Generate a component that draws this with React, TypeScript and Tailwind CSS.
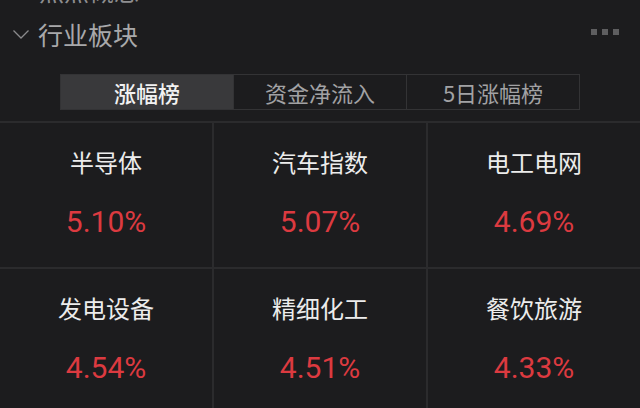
type Sector = {
  name: string
  change: string
}

const tabs = ['涨幅榜', '资金净流入', '5日涨幅榜']

const sectors: Sector[] = [
  { name: '半导体', change: '5.10%' },
  { name: '汽车指数', change: '5.07%' },
  { name: '电工电网', change: '4.69%' },
  { name: '发电设备', change: '4.54%' },
  { name: '精细化工', change: '4.51%' },
  { name: '餐饮旅游', change: '4.33%' },
]

const cjk = "font-['Noto_Sans_CJK_SC','Noto_Sans',sans-serif]"

function SectorCell({ sector }: { sector: Sector }) {
  return (
    <div className="flex h-[144px] flex-col items-center bg-[#1c1c1e] pt-[27px]">
      <div className={`${cjk} text-[24px] leading-[24px] text-[#ececec]`}>{sector.name}</div>
      <div className="mt-[33px] font-['Roboto',sans-serif] text-[30px] leading-[30px] text-[#dc3a40]">
        {sector.change}
      </div>
    </div>
  )
}

export default function App() {
  return (
    <div className={`${cjk} h-[408px] w-[640px] overflow-hidden bg-[#1c1c1e]`}>
      {/* Previous section, scrolled out of view */}
      <div className="h-[4px] overflow-hidden">
        <div className="-mt-[24px] pl-[39px] text-[25px] leading-[28px] text-[#8e8e90]">热点概念</div>
      </div>

      {/* Section header */}
      <div className="mt-[14px] flex h-[32px] items-center pr-[21px]">
        <svg
          viewBox="0 0 16 9"
          className="ml-[13px] h-[9px] w-[16px]"
          fill="none"
          stroke="#8a8a8c"
          strokeWidth="1.3"
        >
          <path d="M0.5 0.5 8 8 15.5 0.5" />
        </svg>
        <span className="ml-[9px] text-[25px] leading-[32px] text-[#a8a8aa]">行业板块</span>
        <div className="mb-[5px] ml-auto flex gap-[5px]">
          <span className="h-[6px] w-[6px] bg-[#5e5e60]" />
          <span className="h-[6px] w-[6px] bg-[#5e5e60]" />
          <span className="h-[6px] w-[6px] bg-[#5e5e60]" />
        </div>
      </div>

      {/* Ranking tabs */}
      <div className="mx-[60px] mt-[24px] flex h-[36px] border border-[#333335]">
        {tabs.map((tab, i) => (
          <div
            key={tab}
            className={
              i === 0
                ? 'flex flex-1 items-center justify-center bg-[#39393b] text-[22px] font-medium text-[#f2f2f2]'
                : 'flex flex-1 items-center justify-center border-l border-[#333335] text-[22px] text-[#a2a2a4]'
            }
          >
            {tab}
          </div>
        ))}
      </div>

      {/* Sector grid */}
      <div className="mt-[11px] grid grid-cols-3 gap-[2px] border-t-2 border-[#2b2b2d] bg-[#2b2b2d]">
        {sectors.map((s) => (
          <SectorCell key={s.name} sector={s} />
        ))}
      </div>
    </div>
  )
}
